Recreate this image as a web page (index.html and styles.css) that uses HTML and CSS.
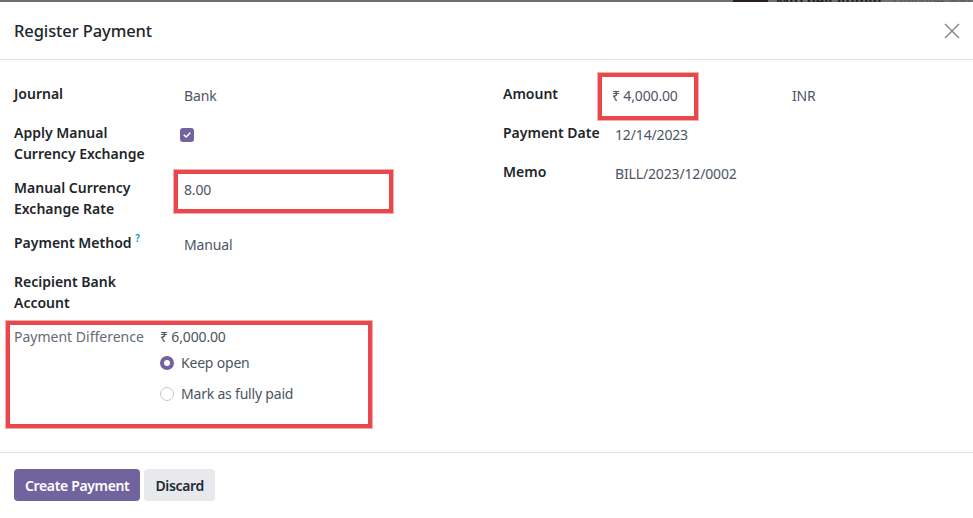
FILE: index.html
```html
<!DOCTYPE html>
<html>
<head>
<meta charset="utf-8">
<link rel="stylesheet" href="styles.css">
</head>
<body>
<div class="topstrip"><span class="avatar"></span><span class="who">Mitchell Admin</span><span class="ago">5 minutes ago</span></div>
<div class="dialog">
  <header class="head">
    <h4 class="title">Register Payment</h4>
    <svg class="close" width="16" height="16" viewBox="0 0 16 16"><path d="M1 1L15 15M15 1L1 15" stroke="#8a8a8a" stroke-width="1.5" fill="none"/></svg>
  </header>
  <main class="body">
    <div class="col left">
      <div class="row"><div class="lbl">Journal</div><div class="val">Bank</div></div>
      <div class="row"><div class="lbl">Apply Manual<br>Currency Exchange</div><div class="val"><span class="check"><svg width="10" height="10" viewBox="0 0 10 10"><path d="M2.2 5.2L4.2 7L7.8 3.2" stroke="#fff" stroke-width="1.6" fill="none" stroke-linecap="round" stroke-linejoin="round"/></svg></span></div></div>
      <div class="row"><div class="lbl">Manual Currency<br>Exchange Rate</div><div class="val">8.00</div></div>
      <div class="row"><div class="lbl">Payment Method <sup class="q">?</sup></div><div class="val">Manual</div></div>
      <div class="row"><div class="lbl">Recipient Bank<br>Account</div><div class="val"></div></div>
      <div class="diff">
        <div class="difflbl">Payment Difference</div>
        <div class="diffval">
          <div class="amt">₹ 6,000.00</div>
          <label class="radio"><span class="dot on"></span>Keep open</label>
          <label class="radio"><span class="dot"></span>Mark as fully paid</label>
        </div>
      </div>
    </div>
    <div class="col right">
      <div class="row r"><div class="lbl">Amount</div><div class="val amount"><span>₹ 4,000.00</span><span class="cur">INR</span></div></div>
      <div class="row r"><div class="lbl">Payment Date</div><div class="val">12/14/2023</div></div>
      <div class="row r"><div class="lbl">Memo</div><div class="val">BILL/2023/12/0002</div></div>
    </div>
  </main>
  <footer class="foot">
    <button class="btn primary">Create Payment</button>
    <button class="btn secondary">Discard</button>
  </footer>
  <div class="mark m1"></div>
  <div class="mark m2"></div>
  <div class="mark m3"></div>
</div>
</body>
</html>
```
FILE: styles.css
```css
* { box-sizing: border-box; }
html, body { margin: 0; padding: 0; background: #fff; }
body { font-family: "Noto Sans", "Open Sans", sans-serif; font-size: 14px; color: #212529; width: 973px; height: 518px; overflow: hidden; }
.topstrip { height: 2px; background: #6e6e6e; overflow: hidden; position: relative; display: flex; white-space: nowrap; }
.topstrip .avatar { margin-left: 733px; width: 35px; height: 2px; background: #2a1f28; }
.topstrip .who { margin-left: 8px; font-weight: 700; color: #222; font-size: 14px; line-height: 2px; }
.topstrip .ago { margin-left: 8px; color: #555; font-size: 12px; line-height: 2px; }
.dialog { position: relative; }
.head { height: 58px; display: flex; align-items: center; justify-content: space-between; padding: 0 13px 0 14px; border-bottom: 1px solid #dee2e6; }
.title { margin: 0; font-size: 16.5px; font-weight: 500; color: #212529; letter-spacing: -0.1px; }
.close { margin-top: 0; }
.body { display: flex; padding: 23px 14px 0 14px; height: 393px; border-bottom: 1px solid #dee2e6; }
.col.left { width: 489px; }
.col.right { flex: 1; }
.row { display: grid; grid-template-columns: 170px 1fr; align-items: start; }
.row.r { grid-template-columns: 112px 1fr; }
.lbl { font-weight: 600; line-height: 21px; padding-bottom: 13px; color: #212529; }
.val { min-height: 39px; padding-top: 2px; line-height: 21px; color: #4b5563; letter-spacing: -0.15px; }
.q { color: #0d8ed6; font-size: 10px; font-weight: 600; vertical-align: top; position: relative; top: -4px; }
.check { display: inline-flex; align-items: center; justify-content: center; width: 14px; height: 14px; border-radius: 3px; background: #71639e; margin-top: 2px; margin-left: -4px; }
.amount { display: flex; }
.amount span:first-child { width: 180px; margin-left: -3px; }
.diff { display: grid; grid-template-columns: 146px 1fr; }
.difflbl { color: #666b73; line-height: 21px; }
.amt { line-height: 21px; color: #4b5563; letter-spacing: -0.15px; }
.radio { display: flex; align-items: center; gap: 7px; height: 31px; color: #4b5563; letter-spacing: -0.2px; }
.dot { width: 14px; height: 14px; border-radius: 50%; border: 1px solid #c5c9cf; background: #fff; }
.dot.on { border: 4px solid #71639e; }
.foot { display: flex; gap: 4px; padding: 16px 14px; }
.btn { font-family: inherit; font-size: 14px; font-weight: 600; border: none; border-radius: 4px; height: 32px; padding: 0 11px; cursor: pointer; letter-spacing: -0.35px; }
.primary { background: #71639e; color: #fff; }
.secondary { background: #e7e9ed; color: #1f2937; }
.mark { position: absolute; border: 4px solid #e8474c; box-shadow: 0 0 0 1px rgba(232,71,76,0.45); }
.m1 { left: 598px; top: 71px; width: 100px; height: 47px; }
.m2 { left: 174px; top: 168px; width: 219px; height: 43px; }
.m3 { left: 6px; top: 319px; width: 366px; height: 107px; }
```
